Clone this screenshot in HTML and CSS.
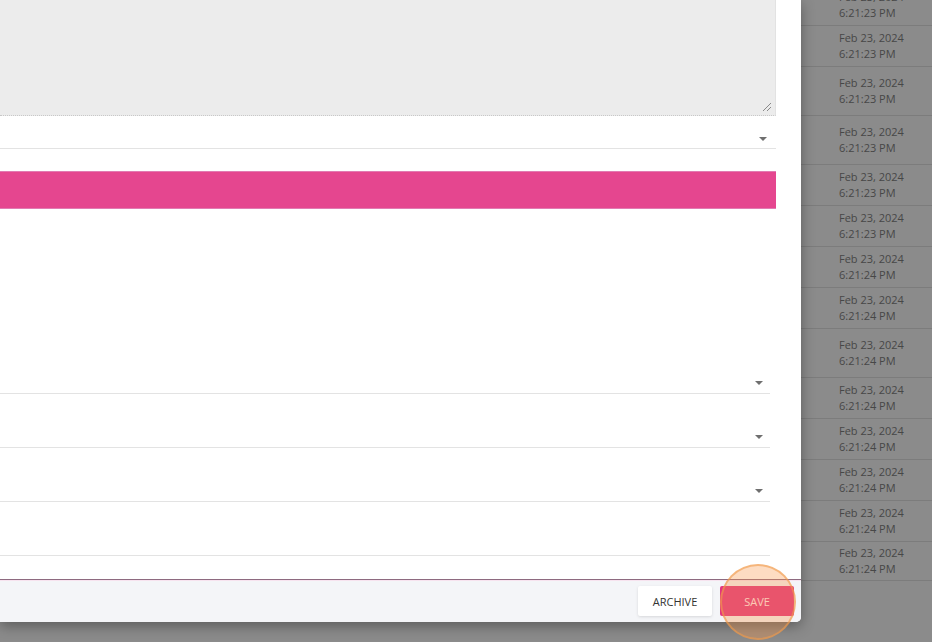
FILE: index.html
```html
<!DOCTYPE html>
<html lang="en">
<head>
    <meta charset="UTF-8">
    <meta name="viewport" content="width=device-width, initial-scale=1.0">
    <title>Edit Item</title>
    <link rel="stylesheet" href="styles.css">
</head>
<body>
    <div class="page">
        <div class="modal">
            <div class="modal-body">
                <div class="textarea">
                    <svg class="grip" width="10" height="10" viewBox="0 0 10 10">
                        <path d="M1 9 L9 1 M5 9 L9 5" stroke="#8a8a8a" stroke-width="1" fill="none"/>
                    </svg>
                </div>
                <div class="select select-top">
                    <span class="caret"></span>
                </div>
                <div class="pink-bar"></div>
                <div class="fields">
                    <div class="select field"><span class="caret"></span></div>
                    <div class="select field"><span class="caret"></span></div>
                    <div class="select field"><span class="caret"></span></div>
                    <div class="select field"></div>
                </div>
            </div>
            <div class="modal-footer">
                <button class="btn btn-archive">ARCHIVE</button>
                <button class="btn btn-save">SAVE<span class="highlight"></span></button>
            </div>
        </div>

        <ul class="list">
            <li class="row">Feb 23, 2024<br>6:21:23 PM</li>
            <li class="row">Feb 23, 2024<br>6:21:23 PM</li>
            <li class="row tall">Feb 23, 2024<br>6:21:23 PM</li>
            <li class="row tall">Feb 23, 2024<br>6:21:23 PM</li>
            <li class="row">Feb 23, 2024<br>6:21:23 PM</li>
            <li class="row">Feb 23, 2024<br>6:21:23 PM</li>
            <li class="row">Feb 23, 2024<br>6:21:24 PM</li>
            <li class="row">Feb 23, 2024<br>6:21:24 PM</li>
            <li class="row tall">Feb 23, 2024<br>6:21:24 PM</li>
            <li class="row">Feb 23, 2024<br>6:21:24 PM</li>
            <li class="row">Feb 23, 2024<br>6:21:24 PM</li>
            <li class="row">Feb 23, 2024<br>6:21:24 PM</li>
            <li class="row">Feb 23, 2024<br>6:21:24 PM</li>
            <li class="row short">Feb 23, 2024<br>6:21:24 PM</li>
        </ul>
    </div>
</body>
</html>
```

FILE: styles.css
```css
body {
    font-family: "Open Sans", Arial, sans-serif;
    margin: 0;
    padding: 0;
    background-color: #8b8b8b;
    overflow: hidden;
    height: 642px;
}
.page {
    display: flex;
    align-items: flex-start;
    height: 642px;
}
.modal {
    position: relative;
    z-index: 2;
    width: 801px;
    height: 622px;
    flex-shrink: 0;
    background: #fff;
    border-bottom-right-radius: 5px;
    box-shadow: 0 4px 14px rgba(0, 0, 0, 0.35);
    display: flex;
    flex-direction: column;
}
.modal-body {
    flex: 1;
    padding-right: 25px;
    display: flex;
    flex-direction: column;
}
.textarea {
    position: relative;
    height: 116px;
    background-color: #ececec;
    border-right: 1px solid #e2e2e2;
    border-bottom: 1px dotted #c8c8c8;
    box-sizing: border-box;
}
.grip {
    position: absolute;
    right: 3px;
    bottom: 3px;
}
.select {
    display: flex;
    align-items: center;
    justify-content: flex-end;
    border-bottom: 1px solid #e3e3e3;
    box-sizing: border-box;
}
.select-top {
    height: 33px;
    padding-right: 9px;
    padding-top: 14px;
}
.caret {
    width: 0;
    height: 0;
    border-left: 4px solid transparent;
    border-right: 4px solid transparent;
    border-top: 4px solid #6f6f6f;
}
.pink-bar {
    margin-top: 22px;
    height: 38px;
    background-color: #e5468f;
    border-top: 1px solid #e27bb2;
    border-bottom: 1px solid #e27bb2;
    box-sizing: border-box;
}
.fields {
    margin-top: 131px;
    margin-right: 6px;
}
.field {
    height: 54px;
    padding-right: 7px;
    padding-top: 33px;
}
.modal-footer {
    height: 44px;
    margin-top: 23px;
    background-color: #f4f5f8;
    border-top: 1px solid #8e6a80;
    box-shadow: 0 1px 0 #f7e3ef inset;
    border-bottom-right-radius: 5px;
    display: flex;
    align-items: center;
    justify-content: flex-end;
    gap: 8px;
    padding-right: 7px;
    box-sizing: border-box;
}
.btn {
    position: relative;
    height: 30px;
    width: 74px;
    border: none;
    border-radius: 2px;
    font-family: "Open Sans", Arial, sans-serif;
    font-size: 11px;
    padding: 0;
    cursor: pointer;
}
.btn-archive {
    background: #fff;
    color: #333;
    box-shadow: 0 1px 3px rgba(0, 0, 0, 0.12);
}
.btn-save {
    background: #e2357f;
    color: #fde3ea;
}
.highlight {
    position: absolute;
    left: 50%;
    top: 50%;
    width: 72px;
    height: 72px;
    margin-left: -37px;
    margin-top: -37px;
    border-radius: 50%;
    background: rgba(248, 150, 70, 0.33);
    border: 2px solid rgba(240, 155, 75, 0.6);
    pointer-events: none;
}
.list {
    list-style: none;
    margin: -15px 0 0 0;
    padding: 0;
    flex: 1;
}
.row {
    height: 41px;
    box-sizing: border-box;
    border-bottom: 1px solid #7c7c7c;
    padding-left: 38px;
    display: flex;
    flex-direction: column;
    justify-content: center;
    font-size: 11px;
    line-height: 16px;
    color: #474747;
}
.row.tall {
    height: 49px;
}
.row.short {
    height: 39px;
}
```
